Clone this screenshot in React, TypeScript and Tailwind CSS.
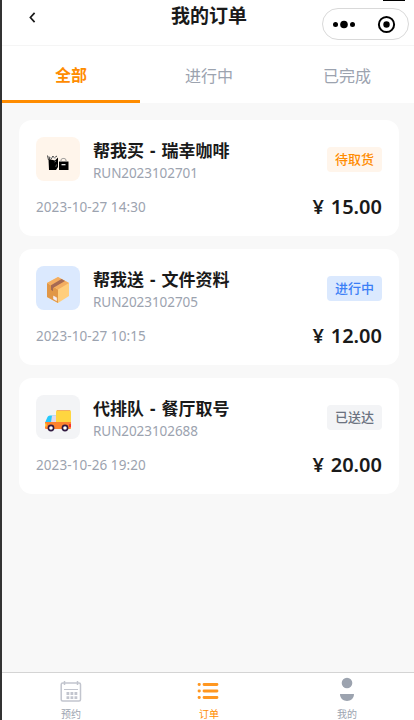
import React from "react";

const ShoppingBags = () => (
  <svg width="22" height="18" viewBox="0 0 22 18">
    <path d="M1.5 5 8 6.5l3-3v9.5L9 16H2z" fill="#000" />
    <path d="M1.5 6 .5 1.5M3 6 2 2.5M4 5l2-3 1 2 3-2" fill="none" stroke="#444" strokeWidth="1" />
    <path d="M3 3.5h2M6 3.5l3 .5" stroke="#bbb" strokeWidth="1" />
    <path d="m7.5 8 1.5-.7M9.5 10.5l-.7 2.5" stroke="#888" strokeWidth=".7" />
    <path d="M12 7.5h9.5V16H12z" fill="#000" />
    <path d="M14 8V6.2c0-2.3 5-2.3 5 0V8" fill="none" stroke="#888" />
    <path d="M14.5 10.7h4" stroke="#fff" strokeWidth="1.2" />
  </svg>
);

const Parcel = () => (
  <svg width="24" height="28" viewBox="0 0 24 28">
    <path d="M12 1 23 7v13l-11 7-11-6V7z" fill="#ffce7c" />
    <path d="M1 7 12 13.5V27L1 21z" fill="#e19747" />
    <path d="M12 1 23 7l-11 6.5L1 7z" fill="#f3ad61" />
    <path d="m15.5 3 3.5 2-12 7v3.2l-2-1.5V9.3z" fill="#a56953" />
    <path d="m7.5 20 3.2 1.8v3L7.5 23z" fill="#f3eef8" stroke="#f3eef8" strokeWidth=".5" />
  </svg>
);

const Truck = () => (
  <svg width="28" height="24" viewBox="0 0 28 24">
    <path d="M1.5 12.5 3.5 8Q4 6.5 6 6.5h6v7H1.5z" fill="#26c9fc" />
    <path d="M8 6.5h4.5v7H7z" fill="#e1d8ec" />
    <rect x="12" y="1" width="15" height="13.5" rx="1.5" fill="#ffd640" />
    <path d="M13 1.5h13" stroke="#f3ad61" strokeWidth="1" />
    <path d="M1 13h26v6q0 1-1 1H2q-1 0-1-1z" fill="#ff822d" />
    <path d="M1 14.5h1.5v3H1z" fill="#fcd53f" />
    <path d="M25 15h2v3h-2z" fill="#f8312f" />
    <circle cx="7" cy="19" r="2.6" fill="#fff" stroke="#321b41" strokeWidth="1.6" />
    <circle cx="21" cy="19" r="2.6" fill="#fff" stroke="#321b41" strokeWidth="1.6" />
  </svg>
);

const orders = [
  { title: "帮我买 - 瑞幸咖啡", id: "RUN2023102701", time: "2023-10-27 14:30", price: "15.00", status: "待取货", tile: "bg-[#fff5eb]", badge: "bg-[#fff5eb] text-[#ff8c00]", icon: <ShoppingBags />, shift: "pt-[7px]" },
  { title: "帮我送 - 文件资料", id: "RUN2023102705", time: "2023-10-27 10:15", price: "12.00", status: "进行中", tile: "bg-[#dbe9fe]", badge: "bg-[#dbe9fe] text-[#3b7ff6]", icon: <Parcel />, shift: "pt-[3px]" },
  { title: "代排队 - 餐厅取号", id: "RUN2023102688", time: "2023-10-26 19:20", price: "20.00", status: "已送达", tile: "bg-[#f3f4f6]", badge: "bg-[#f3f4f6] text-[#6b7280]", icon: <Truck />, shift: "pt-[7px]" },
];

export default function App() {
  return (
    <div className="flex h-[720px] w-[414px] flex-col overflow-hidden border-l-2 border-[#333] bg-[#f8f8f8] font-['Noto_Sans','Noto_Sans_CJK_SC',sans-serif] text-[#1a1a1a]">
      <header className="relative h-[46px] w-[414px] shrink-0 border-b border-[#f5f5f5] bg-white">
        <svg className="absolute left-[26px] top-[12px]" width="8" height="11" viewBox="0 0 8 11">
          <path d="M6.6.9 2.4 5.5l4.2 4.6" fill="none" stroke="#1a1a1a" strokeWidth="1.7" />
        </svg>
        <h1 className="pt-[4px] text-center text-[19px] font-bold leading-[24px]">我的订单</h1>
        <div className="absolute right-[11px] top-0 h-px w-[22px] bg-black" />
        <div className="absolute left-[320px] top-[8px] flex h-[32px] w-[87px] items-center rounded-full border border-[#d9d9d9] bg-white">
          <svg width="85" height="30" viewBox="0 0 85 30">
            <circle cx="12.5" cy="15.5" r="2.5" />
            <circle cx="21" cy="15.5" r="3.8" />
            <circle cx="29.5" cy="15.5" r="2.5" />
            <circle cx="63.5" cy="15.5" r="7.6" fill="none" stroke="#000" strokeWidth="2" />
            <circle cx="63.5" cy="15.5" r="3.2" />
          </svg>
        </div>
      </header>

      <nav className="grid h-[57px] w-[414px] shrink-0 grid-cols-3 bg-white text-center text-[16px] leading-[24px] text-[#9ca3af]">
        <div className="border-b-[3px] border-[#ff8c00] pt-[17px] font-bold text-[#ff8c00]">全部</div>
        <div className="pt-[18px]">进行中</div>
        <div className="pt-[18px]">已完成</div>
      </nav>

      <main className="flex flex-1 flex-col gap-[13px] pl-[17px] pr-[15px] pt-[17px]">
        {orders.map((o) => (
          <section key={o.id} className="h-[116px] rounded-[13px] bg-white p-[17px]">
            <div className="flex h-[44px] items-center">
              <div className={`flex size-[44px] items-center justify-center rounded-[8px] ${o.tile} ${o.shift}`}>{o.icon}</div>
              <div className="ml-[13px] flex-1 pt-[2px]">
                <h2 className="whitespace-nowrap text-[17px] font-bold leading-[25px] [word-spacing:1.6px]">{o.title}</h2>
                <p className="text-[13.5px] leading-[20px] tracking-[-0.07px] text-[#9ca3af]">{o.id}</p>
              </div>
              <span className={`h-[25px] w-[55px] rounded-[4px] text-center text-[13px] font-medium leading-[25px] ${o.badge}`}>{o.status}</span>
            </div>
            <div className="mt-[13px] flex h-[26px] items-center justify-between">
              <span className="pt-px text-[13.5px] tracking-[0.08px] text-[#9ca3af]">{o.time}</span>
              <span className="text-[20px] font-semibold [word-spacing:1.5px]">¥ {o.price}</span>
            </div>
          </section>
        ))}
      </main>

      <footer className="grid h-[48px] w-[414px] shrink-0 grid-cols-3 border-t border-[#d4d4d4] bg-white text-center text-[10px] leading-[12px] text-[#9ca3af]">
        <div className="flex flex-col items-center">
          <svg className="mt-[7px] h-[24px] w-[24px] shrink-0" viewBox="0 0 24 24" fill="none" stroke="#c2c5ce" strokeWidth="1.5">
            <rect x="2.2" y="3" width="19.3" height="18" rx="1.5" />
            <path d="M5.5 1v4M18.5 1v4" />
            <path d="M5 9.5h14" strokeWidth="1" />
            <path d="M7.5 13.5h10.8M7.5 17.7h10.8" strokeWidth="2.8" strokeDasharray="2.8 1.2" />
          </svg>
          <span className="mt-[4px]">预约</span>
        </div>
        <div className="flex flex-col items-center text-[#ff8c00]">
          <svg className="mt-[7px] h-[24px] w-[24px] shrink-0" viewBox="0 0 24 24" stroke="#ff9720" strokeWidth="2.8" strokeLinecap="round">
            <path d="M2 4.5h.4M2 11h.4M2 17.5h.4M7 4.5h13M7 11h13M7 17.5h13" />
          </svg>
          <span className="mt-[4px]">订单</span>
        </div>
        <div className="flex flex-col items-center">
          <svg className="mt-[4px] h-[27px] w-[24px] shrink-0" viewBox="0 0 24 27" fill="#9ca3af">
            <circle cx="12" cy="6" r="5.3" />
            <path d="M5 17h14c0 9.3-14 9.3-14 0z" />
          </svg>
          <span className="mt-[4px]">我的</span>
        </div>
      </footer>
    </div>
  );
}
